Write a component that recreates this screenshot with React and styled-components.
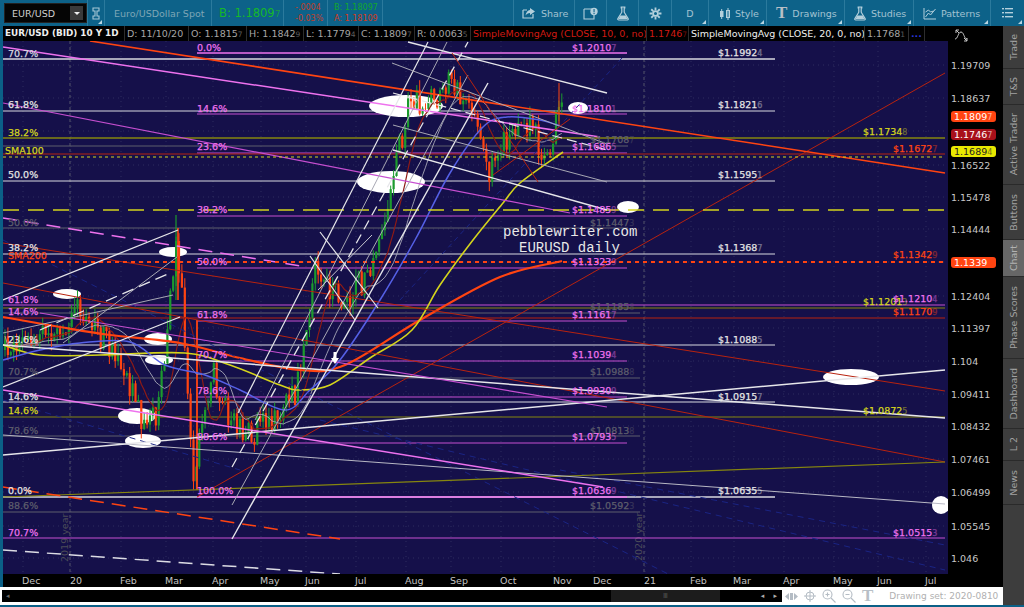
import React from 'react';
import styled, { createGlobalStyle } from 'styled-components';

const GlobalStyle = createGlobalStyle`
  html, body { margin: 0; padding: 0; background: #0b6087; overflow: hidden; }
  body { font-family: "DejaVu Sans", "Open Sans", sans-serif; }
`;

// chart colours
const C = {
  bg: '#15104a',
  white: '#d9d9e0',
  grey: '#5e5e6c',
  mag: '#c64fd0',
  pink: '#ee72ee',
  olive: '#86860f',
  yellow: '#d4d41c',
  red: '#b8230f',
  orange: '#ff4411',
  dred: '#8e1a16',
  blue: '#5560e6',
  navy: '#1a2484',
};

const hLines = [
  [3, 775, 59, C.white, 1.3], [197, 627, 53, C.pink, 1.3],
  [3, 775, 111, C.white, 1], [197, 627, 114, C.mag, 1.2],
  [3, 945, 138, C.olive, 1.3], [3, 628, 146, C.grey, 1],
  [197, 627, 153, C.mag, 1], [3, 945, 154, C.red, 1.2],
  [3, 775, 181, C.white, 1], [197, 627, 216, C.mag, 1.2],
  [3, 628, 228, C.grey, 1], [3, 775, 254, C.white, 1],
  [197, 627, 268, C.mag, 1.2], [3, 945, 305, C.mag, 1.1],
  [3, 945, 308, C.olive, 1.2], [3, 640, 313, C.grey, 1],
  [3, 945, 318, C.red, 1.1], [197, 627, 321, C.mag, 1.2],
  [3, 775, 345, C.white, 1], [197, 627, 361, C.mag, 1.2],
  [3, 640, 378, C.grey, 1], [197, 627, 397, C.mag, 1],
  [3, 775, 402, C.white, 1], [3, 945, 417, C.olive, 1.2],
  [3, 640, 436, C.grey, 1], [197, 627, 443, C.mag, 1.1],
  [3, 775, 497, C.white, 1.3], [197, 627, 497, C.pink, 1.3],
  [3, 640, 512, C.grey, 1], [3, 945, 538, C.mag, 1.1],
];

// x1 y1 x2 y2 colour width dash
const diagonals = [
  // background navy dashes
  [622, 58, 400, 300, C.navy, 1, '5 4'],
  [3, 240, 700, 590, C.navy, 1, '6 5'],
  [320, 420, 945, 570, C.navy, 1, '6 5'],
  [560, 470, 945, 545, C.navy, 1, '6 5'],
  [3, 400, 240, 470, C.navy, 1, '6 5'],
  // long thin red
  [3, 243, 945, 391, C.red, 1],
  [3, 283, 945, 462, C.red, 1],
  [197, 497, 945, 73, C.red, 1],
  // olive & grey & white long
  [3, 497, 945, 462, C.olive, 1.2],
  [3, 435, 945, 504, '#b8b8c4', 1],
  [3, 455, 945, 370, '#e6e6ea', 1.5],
  [3, 345, 945, 418, '#e6e6ea', 1.5],
  // heavy trend lines
  [90, 41, 945, 173, C.orange, 1.6],
  [3, 47, 600, 137, C.pink, 1.5],
  [3, 103, 570, 213, C.mag, 1.2],
  [3, 390, 603, 487, C.pink, 1.5],
  [40, 313, 607, 407, C.mag, 1.1],
  [3, 218, 307, 267, C.pink, 1.5, '14 8'],
  [3, 487, 340, 539, C.orange, 1.5, '14 8'],
  [3, 550, 340, 574, '#dcdce4', 1.5, '14 8'],
  [3, 210, 945, 210, C.yellow, 1.6, '16 9'],
  [3, 262, 945, 262, C.orange, 2, '4 4'],
  [3, 157, 945, 157, C.yellow, 1, '3 3'],
  // small channel on the left
  [3, 300, 178, 230, '#e6e6ea', 1.3],
  [63, 343, 177, 257, '#a8a8b4', 1],
  [40, 330, 170, 273, '#e6e6ea', 1.3, '12 6'],
  [3, 333, 173, 295, '#a8a8b4', 1],
  [3, 387, 180, 317, '#e6e6ea', 1.3],
  // big pitchfork
  [232, 539, 488, 83, '#e6e6ea', 1.4],
  [232, 505, 468, 75, '#a8a8b4', 1],
  [232, 467, 468, 42, '#e6e6ea', 1.3, '10 6'],
  [238, 413, 428, 42, '#e6e6ea', 1.2],
  [255, 420, 447, 42, '#a8a8b4', 1],
  [320, 232, 378, 308, '#e6e6ea', 1.2],
  [310, 256, 355, 320, '#e6e6ea', 1.2],
  [318, 290, 372, 235, '#c8c8d0', 1],
  // channel on the top
  [408, 42, 607, 93, '#e6e6ea', 1.3],
  [392, 63, 607, 144, '#a8a8b4', 1],
  [393, 93, 607, 150, '#e6e6ea', 1.2, '10 5'],
  [393, 125, 607, 182, '#a8a8b4', 1],
  [393, 150, 607, 210, '#e6e6ea', 1.3],
  // zigzag
  [452, 53, 538, 182, C.red, 1],
  [493, 175, 570, 119, C.red, 1],
];

const smooth = {
  orange: [[[3, 317], [60, 327], [110, 335], [180, 343], [240, 358], [300, 370], [345, 365], [420, 320], [500, 277], [562, 261]], C.orange, 2.2],
  yellow: [[[3, 345], [40, 355], [100, 355], [185, 353], [230, 365], [280, 385], [300, 390], [330, 385], [370, 358], [412, 330], [440, 285], [473, 240], [503, 203], [520, 183], [563, 152]], C.yellow, 1.6],
  blue: [[[3, 360], [40, 350], [80, 343], [130, 342], [165, 365], [205, 375], [240, 390], [285, 410], [310, 390], [340, 360], [380, 300], [415, 240], [450, 173], [483, 127], [507, 117], [540, 120], [560, 126]], C.blue, 1.5],
};

// catmull-rom through the points
const curve = (pts) => {
  let d = `M${pts[0][0]} ${pts[0][1]}`;
  for (let i = 0; i < pts.length - 1; i++) {
    const p0 = pts[Math.max(0, i - 1)];
    const p1 = pts[i];
    const p2 = pts[i + 1];
    const p3 = pts[Math.min(pts.length - 1, i + 2)];
    const c1x = p1[0] + (p2[0] - p0[0]) / 6;
    const c1y = p1[1] + (p2[1] - p0[1]) / 6;
    const c2x = p2[0] - (p3[0] - p1[0]) / 6;
    const c2y = p2[1] - (p3[1] - p1[1]) / 6;
    d += `C${c1x.toFixed(1)} ${c1y.toFixed(1)} ${c2x.toFixed(1)} ${c2y.toFixed(1)} ${p2[0]} ${p2[1]}`;
  }
  return d;
};

const ellipses = [
  [406, 106, 37, 11], [391, 182, 34, 11], [578, 108, 10, 6], [628, 207, 11, 6],
  [67, 294, 14, 5], [173, 252, 14, 5], [158, 339, 14, 6], [159, 360, 14, 5],
  [137, 416, 19, 8], [143, 441, 18, 7], [851, 377, 28, 8], [941, 505, 9, 9],
];

const LW = '#e4e4e4';

// text, x, centre y, colour
const labels = [
  ['70.7%', 8, 53, C.white], ['0.0%', 197, 47, C.pink], ['$1.20107', 572, 47, C.pink],
  ['$1.19924', 718, 52, LW], ['61.8%', 8, 104, LW], ['14.6%', 197, 108, C.pink],
  ['$1.18101', 572, 108, C.pink], ['$1.18216', 718, 104, LW], ['38.2%', 8, 132, C.yellow],
  ['$1.17348', 863, 131, C.yellow], ['$1.17087', 590, 139, C.grey], ['23.6%', 197, 146, C.pink],
  ['$1.16865', 572, 146, C.pink], ['SMA100', 5, 150, C.yellow], ['$1.16727', 893, 148, C.orange],
  ['50.0%', 8, 174, LW], ['$1.15951', 718, 174, LW], ['38.2%', 197, 209, C.pink],
  ['$1.14859', 572, 209, C.pink], ['50.0%', 8, 222, C.grey], ['$1.14473', 590, 222, C.grey],
  ['38.2%', 8, 247, LW], ['$1.13687', 718, 247, LW], ['SMA200', 8, 255, C.orange],
  ['$1.13429', 893, 254, C.orange], ['50.0%', 197, 261, C.pink], ['$1.13239', 572, 261, C.pink],
  ['61.8%', 8, 299, C.pink], ['14.6%', 8, 311, C.pink], ['$1.12013', 863, 301, C.yellow],
  ['$1.12104', 893, 298, C.pink], ['$1.11858', 590, 306, C.grey], ['$1.11709', 893, 311, C.orange],
  ['61.8%', 197, 314, C.pink], ['$1.11617', 572, 314, C.pink], ['23.6%', 8, 339, LW],
  ['$1.10885', 718, 339, LW], ['70.7%', 197, 354, C.pink], ['$1.10394', 572, 354, C.pink],
  ['70.7%', 8, 371, C.grey], ['$1.09888', 590, 371, C.grey], ['78.6%', 197, 390, C.pink],
  ['$1.09309', 572, 390, C.pink], ['14.6%', 8, 396, LW], ['$1.09157', 718, 396, LW],
  ['14.6%', 8, 410, C.yellow], ['$1.08725', 863, 410, C.yellow], ['78.6%', 8, 430, C.grey],
  ['$1.08138', 590, 430, C.grey], ['88.6%', 197, 436, C.pink], ['$1.07935', 572, 436, C.pink],
  ['0.0%', 8, 490, LW], ['100.0%', 197, 490, C.pink], ['$1.06369', 572, 490, C.pink],
  ['$1.06355', 718, 490, LW], ['88.6%', 8, 505, C.grey], ['$1.05923', 590, 505, C.grey],
  ['70.7%', 8, 532, C.pink], ['$1.05153', 893, 532, C.pink],
];

const path = [
  [5, 350], [20, 345], [50, 335], [75, 312], [100, 335], [125, 370], [148, 435], [160, 400],
  [176, 240], [182, 300], [193, 480], [202, 430], [212, 365], [222, 405], [240, 430], [260, 430],
  [285, 410], [300, 380], [315, 268], [330, 292], [350, 300], [375, 260], [395, 160], [410, 105],
  [430, 98], [450, 85], [470, 105], [488, 170], [510, 130], [530, 122], [548, 168], [558, 105], [563, 120],
];

const pathAt = (x) => {
  for (let i = 1; i < path.length; i++) {
    if (x <= path[i][0]) {
      const [x0, y0] = path[i - 1];
      const [x1, y1] = path[i];
      return y0 + ((y1 - y0) * (x - x0)) / (x1 - x0);
    }
  }
  return path[path.length - 1][1];
};

const makeCandles = () => {
  let seed = 4711;
  const rnd = () => {
    seed = (seed * 16807) % 2147483647;
    return seed / 2147483647;
  };
  const out = [];
  let prev = pathAt(5);
  for (let x = 5; x <= 563; x += 2.9) {
    const close = pathAt(x) + (rnd() - 0.5) * 30;
    const top = Math.min(prev, close);
    const bot = Math.max(prev, close);
    out.push({ x, open: prev, close, high: top - rnd() * 10, low: bot + rnd() * 10 });
    prev = close;
  }
  return out;
};

const candles = makeCandles();

const sma = (n) =>
  candles
    .map((c, i) => {
      const from = Math.max(0, i - n + 1);
      const win = candles.slice(from, i + 1);
      const avg = win.reduce((s, w) => s + w.close, 0) / win.length;
      return `${c.x.toFixed(1)},${avg.toFixed(1)}`;
    })
    .join(' ');

const ticks = [
  ['1.19709', 65], ['1.18637', 98], ['1.17', 131, true], ['1.16522', 165], ['1.15478', 197], ['1.14444', 229],
  ['1.13', 262, true], ['1.12404', 296], ['1.11397', 328], ['1.104', 361], ['1.09411', 394], ['1.08432', 426],
  ['1.07461', 459], ['1.06499', 492], ['1.05545', 526], ['1.046', 558],
];

const months = [
  ['Dec', 22], ['20', 70], ['Feb', 120], ['Mar', 165], ['Apr', 212], ['May', 260], ['Jun', 305], ['Jul', 355],
  ['Aug', 405], ['Sep', 450], ['Oct', 500], ['Nov', 553], ['Dec', 593], ['21', 644], ['Feb', 690], ['Mar', 733],
  ['Apr', 783], ['May', 833], ['Jun', 877], ['Jul', 925],
];

const tabs = [
  ['Trade', 43], ['T&S', 36], ['Active Trader', 80], ['Buttons', 55], ['Chart', 37, true],
  ['Phase Scores', 82], ['Dashboard', 70], ['L 2', 32], ['News', 44],
];

const study = [
  ['EUR/USD (BID) 10 Y 1D', 122, 'title'], ['D: 11/10/20', 64], ['O: 1.18157', 58, 'dim'], ['H: 1.18429', 57, 'dim'],
  ['L: 1.17794', 55, 'dim'], ['C: 1.18097', 56, 'dim'], ['R: 0.00635', 56, 'dim'],
  ['SimpleMovingAvg (CLOSE, 10, 0, no)', 176, 'red'], ['1.17467', 42, 'reddim'],
  ['SimpleMovingAvg (CLOSE, 20, 0, no)', 176, 'bright'], ['1.17681', 44, 'dim'],
];

const Page = styled.div`
  width: 1024px;
  height: 607px;
  display: flex;
  flex-direction: column;
  overflow: hidden;
  background: #0b6087;
`;

const Toolbar = styled.div`
  height: 26px;
  flex: none;
  display: flex;
  align-items: stretch;
  background: #0d6289;
  color: #a3c3d2;
  font-size: 9.5px;
`;

const ToolCell = styled.div`
  position: relative;
  width: ${(p) => p.$w}px;
  flex: none;
  display: flex;
  align-items: center;
  justify-content: ${(p) => p.$center ? 'center' : 'flex-start'};
  gap: ${(p) => p.$gap || 5}px;
  padding-left: ${(p) => p.$pad || 0}px;
  box-sizing: border-box;
  border-right: ${(p) => p.$last ? 'none' : '1px solid #2b7a9d'};
  ${(p) => p.$corner && `
    &::after {
      content: "";
      position: absolute;
      right: 2px;
      bottom: 2px;
      border-left: 4px solid transparent;
      border-bottom: 4px solid #b8d4e0;
    }
  `}
`;

const SymbolBox = styled.div`
  width: 83px;
  height: 20px;
  margin-left: 4px;
  display: flex;
  align-items: center;
  justify-content: space-between;
  box-sizing: border-box;
  padding: 0 3px 0 7px;
  background: #050505;
  border: 1px solid #222;
  color: #cfcfcf;
  font-size: 9.5px;
`;

const DropButton = styled.div`
  width: 13px;
  height: 14px;
  background: #3a3a3a;
  display: flex;
  align-items: center;
  justify-content: center;
  &::after {
    content: "";
    border-left: 3px solid transparent;
    border-right: 3px solid transparent;
    border-top: 3px solid #eee;
  }
`;

const SpotName = styled.span`
  color: #7ea6b6;
  font-size: 9.5px;
  white-space: nowrap;
`;

const BigBid = styled.span`
  color: #15b82a;
  font-size: 11.5px;
  white-space: nowrap;
  small { font-size: 9px; opacity: 0.7; }
`;

const Stack = styled.div`
  display: flex;
  flex-direction: column;
  justify-content: center;
  font-size: 8px;
  line-height: 11px;
  white-space: nowrap;
`;

const Quote = styled.span`
  color: ${(p) => p.$c};
`;

const Body = styled.div`
  flex: 1;
  min-height: 0;
  display: flex;
`;

const Main = styled.div`
  flex: 1;
  min-width: 0;
  display: flex;
  flex-direction: column;
  padding-left: 3px;
`;

const StudyBar = styled.div`
  height: 15px;
  flex: none;
  display: flex;
  background: #000;
  font-size: 9.5px;
  line-height: 15px;
  white-space: nowrap;
`;

const StudyCell = styled.div`
  width: ${(p) => p.$w}px;
  flex: none;
  box-sizing: border-box;
  padding-left: 2px;
  overflow: hidden;
  border-right: 1px solid #2d2d2d;
  color: ${(p) => p.$kind === 'red' || p.$kind === 'reddim' ? '#d11a12' : p.$kind === 'title' || p.$kind === 'bright' ? '#efefef' : '#a6a6a6'};
  font-weight: ${(p) => p.$kind === 'title' ? 700 : 400};
  font-size: ${(p) => p.$kind === 'title' ? '8.8px' : '9.5px'};
  small { font-size: 7.5px; opacity: 0.55; }
`;

const StudyMore = styled(StudyCell)`
  color: #2a35d8;
  font-weight: 700;
`;

const ChartRow = styled.div`
  height: 533px;
  flex: none;
  display: flex;
`;

const Plot = styled.svg`
  display: block;
  width: 945px;
  height: 533px;
  flex: none;
  background: ${C.bg};
`;

const Axis = styled.div`
  position: relative;
  flex: 1;
  margin-top: -15px;
  background: #000;
  color: #c8c8c8;
  font-size: 9.5px;
`;

const AxisIcon = styled.svg`
  display: block;
  position: absolute;
  left: 6px;
  top: 3px;
`;

const AxisTicks = styled.div`
  display: flex;
  flex-direction: column;
  padding: 33px 0 0 3px;
`;

const Tick = styled.div`
  height: ${(p) => p.$h}px;
  line-height: 13px;
  visibility: ${(p) => p.$skip ? 'hidden' : 'visible'};
`;

const PriceTag = styled.div`
  position: absolute;
  left: 3px;
  top: ${(p) => p.$y - 41 + 15 - 5}px;
  width: 42px;
  height: 11px;
  line-height: 11px;
  border-radius: 3px;
  padding-left: 3px;
  color: ${(p) => p.$fg};
  background: ${(p) => p.$bg};
  small { font-size: 8px; opacity: 0.6; }
`;

const TimeAxis = styled.div`
  height: 13px;
  flex: none;
  display: flex;
  background: #000;
  padding-left: 19px;
  color: #c4c4c4;
  font-size: 9.5px;
  line-height: 13px;
`;

const Month = styled.span`
  width: ${(p) => p.$w}px;
  flex: none;
`;

const Footer = styled.div`
  height: 18px;
  flex: none;
  display: flex;
  align-items: center;
  background: #fff;
  margin-left: -3px;
  padding-left: 2px;
`;

const ScrollTrack = styled.div`
  position: relative;
  width: 780px;
  height: 12px;
  flex: none;
  background: #000;
  display: flex;
  align-items: center;
  box-sizing: border-box;
  padding: 0 4px;
  color: #666;
  font-size: 7px;
`;

const ScrollThumb = styled.div`
  position: absolute;
  left: 609px;
  top: 0;
  width: 109px;
  height: 12px;
  background: #1c1c1c;
  color: #555;
  text-align: center;
  line-height: 12px;
  font-size: 7px;
`;

const ScrollArrows = styled.span`
  position: absolute;
  right: 5px;
  top: 0;
  line-height: 12px;
  color: #aaa;
  word-spacing: 7px;
`;

const FooterTools = styled.div`
  display: flex;
  align-items: center;
  gap: 6px;
  padding-left: 3px;
  color: #b4bcc4;
`;

const FontIcon = styled.span`
  font-family: "Liberation Serif", serif;
  font-size: 17px;
  font-weight: 700;
  line-height: 16px;
  color: #b8bfc6;
`;

const DrawingSet = styled.span`
  margin-left: 16px;
  color: #b0b0b0;
  font-size: 9px;
  white-space: nowrap;
`;

const SideTabs = styled.div`
  width: 21px;
  flex: none;
  display: flex;
  flex-direction: column;
  background: #3d3d3d;
  margin-bottom: 2px;
`;

const SideTab = styled.div`
  height: ${(p) => p.$h}px;
  flex: none;
  box-sizing: border-box;
  display: flex;
  align-items: center;
  justify-content: center;
  background: ${(p) => p.$active ? '#666' : '#3d3d3d'};
  color: ${(p) => p.$active ? '#b2b2b2' : '#a2a2a2'};
  border-bottom: 1px solid #2a2a2a;
  font-size: 9.5px;
  span {
    writing-mode: vertical-rl;
    transform: rotate(180deg);
    white-space: nowrap;
  }
`;

const Tiny = styled.text`
  font-family: "DejaVu Sans", sans-serif;
  font-size: 9.5px;
  fill: ${(p) => p.$c};
  stroke: ${(p) => p.$c};
  stroke-width: 0.25px;
  tspan { opacity: 0.45; font-size: 8px; }
`;

const Watermark = styled.text`
  font-family: "Liberation Mono", monospace;
  font-size: 14px;
  fill: #e8e8e8;
`;

const YearMark = styled.text`
  font-family: "DejaVu Sans", sans-serif;
  font-size: 9.5px;
  fill: #4c4c58;
`;

const withDim = (text) => {
  const lead = text.slice(0, -1);
  return <>{lead}<small>{text.slice(-1)}</small></>;
};

const Flask = ({ size = 14 }) => (
  <svg width={size - 2} height={size + 1} viewBox="0 0 12 15">
    <path d="M4.2 1h3.6v1H7.2v4.2l3.9 6.4c.4.7 0 1.4-.8 1.4H1.7c-.8 0-1.2-.7-.8-1.4l3.9-6.4V2h-.6z" fill="none" stroke="#b4d0dc" strokeWidth="1.2" />
    <path d="M3.4 9.5h5.2l2 3.6H1.4z" fill="#b4d0dc" />
  </svg>
);

const PlotArea = () => (
  <Plot viewBox="3 41 945 533">
    {/* grid */}
    {months.map(([m, x]) => (
      <line key={`${m}${x}`} x1={x + 1} y1="41" x2={x + 1} y2="574" stroke="#2e2c5e" strokeWidth="1" strokeDasharray="1 4" />
    ))}
    {ticks.map(([t, y]) => (
      <line key={t} x1="3" y1={y} x2="948" y2={y} stroke="#2e2c5e" strokeWidth="1" strokeDasharray="1 4" />
    ))}
    <line x1="70" y1="41" x2="70" y2="574" stroke="#55556a" strokeDasharray="3 3" />
    <line x1="644" y1="41" x2="644" y2="574" stroke="#55556a" strokeDasharray="3 3" />
    <YearMark transform="rotate(-90 68 562)" x="68" y="562">2019 year</YearMark>
    <YearMark transform="rotate(-90 642 561)" x="642" y="561">2020 year</YearMark>

    {hLines.map(([x1, x2, y, c, w], i) => (
      <line key={i} x1={x1} y1={y} x2={x2} y2={y} stroke={c} strokeWidth={w} />
    ))}
    {ellipses.map(([cx, cy, rx, ry]) => (
      <ellipse key={`${cx}${cy}`} cx={cx} cy={cy} rx={rx} ry={ry} fill="#fff" />
    ))}
    {candles.map((c) => (
      <g key={c.x} stroke={c.close < c.open ? '#1c9a2e' : C.orange}>
        <line x1={c.x} y1={c.high} x2={c.x} y2={c.low} strokeWidth="1" />
        <line x1={c.x} y1={c.open} x2={c.x} y2={c.close} strokeWidth="2.2" />
      </g>
    ))}
    <line x1="176" y1="215" x2="176" y2="300" stroke="#1c9a2e" strokeWidth="1.2" />
    <line x1="178" y1="228" x2="178" y2="300" stroke={C.orange} strokeWidth="1.6" />
    <line x1="197" y1="320" x2="197" y2="490" stroke={C.orange} strokeWidth="1.8" />
    <line x1="559" y1="83" x2="559" y2="125" stroke={C.orange} strokeWidth="1" />

    <polyline points={sma(10)} fill="none" stroke={C.dred} strokeWidth="1.2" />
    <polyline points={sma(20)} fill="none" stroke="#a8a8b8" strokeWidth="0.9" />
    {Object.entries(smooth).map(([k, [pts, c, w]]) => (
      <path key={k} d={curve(pts)} fill="none" stroke={c} strokeWidth={w} />
    ))}
    {diagonals.map(([x1, y1, x2, y2, c, w, dash], i) => (
      <line key={i} x1={x1} y1={y1} x2={x2} y2={y2} stroke={c} strokeWidth={w} strokeDasharray={dash} />
    ))}
    <path d="M335 364l-4-6h2.5v-6h3v6h2.5z" fill="#fff" />

    {labels.map(([t, x, y, c], i) => (
      <Tiny key={i} x={x} y={y + 3.5} $c={c}>
        {t.startsWith('$') ? <>{t.slice(0, -1)}<tspan>{t.slice(-1)}</tspan></> : t}
      </Tiny>
    ))}
    <Watermark x="503" y="236">pebblewriter.com</Watermark>
    <Watermark x="519" y="252">EURUSD daily</Watermark>
  </Plot>
);

const App = () => (
  <Page>
    <GlobalStyle />
    <Toolbar>
      <ToolCell $w={88}>
        <SymbolBox>EUR/USD<DropButton /></SymbolBox>
      </ToolCell>
      <ToolCell $w={17} $center $corner>
        <svg width="8" height="13" viewBox="0 0 8 13">
          <path d="M1 1h6v3H5v5h2v3H1V9h2V4H1z" fill="none" stroke="#a8c8d6" strokeWidth="1.1" />
        </svg>
      </ToolCell>
      <ToolCell $w={107} $pad={9}>
        <SpotName>Euro/USDollar Spot</SpotName>
      </ToolCell>
      <ToolCell $w={72} $pad={7}>
        <BigBid>B: 1.1809<small>7</small></BigBid>
      </ToolCell>
      <ToolCell $w={44} $pad={11}>
        <Stack>
          <Quote $c="#c2402a">-.0004</Quote>
          <Quote $c="#c2402a">-0.03%</Quote>
        </Stack>
      </ToolCell>
      <ToolCell $w={55} $pad={6}>
        <Stack>
          <Quote $c="#12a82c">B: 1.18097</Quote>
          <Quote $c="#d13a1c">A: 1.18109</Quote>
        </Stack>
      </ToolCell>
      <ToolCell $w={131} />
      <ToolCell $w={61} $pad={8}>
        <svg width="14" height="12" viewBox="0 0 14 12">
          <path d="M1 3h4M1 3v8h10V7" fill="none" stroke="#b4d0dc" strokeWidth="1.2" />
          <path d="M8 1l5 3.5L8 8V6C6 6 4.5 7 3.5 8.5 4 5.5 5.5 3 8 3z" fill="#b4d0dc" />
        </svg>
        Share
      </ToolCell>
      <ToolCell $w={32} $center>
        <svg width="15" height="13" viewBox="0 0 15 13">
          <path d="M1 2h8M1 2v10h10V8" fill="none" stroke="#b4d0dc" strokeWidth="1.1" />
          <circle cx="11" cy="4.5" r="3.7" fill="#b4d0dc" />
          <rect x="10.5" y="2" width="1.1" height="3.3" fill="#0d6289" />
          <rect x="10.5" y="6" width="1.1" height="1.1" fill="#0d6289" />
        </svg>
      </ToolCell>
      <ToolCell $w={32} $center><Flask /></ToolCell>
      <ToolCell $w={33} $center>
        <svg width="13" height="13" viewBox="0 0 24 24" fill="none" stroke="#b4d0dc" strokeWidth="3.4">
          <circle cx="12" cy="12" r="4.5" />
          <path d="M12 1v5M12 18v5M1 12h5M18 12h5M4.2 4.2l3.5 3.5M16.3 16.3l3.5 3.5M4.2 19.8l3.5-3.5M16.3 7.7l3.5-3.5" />
        </svg>
      </ToolCell>
      <ToolCell $w={37} $center $corner>D</ToolCell>
      <ToolCell $w={58} $pad={10} $corner $gap={4}>
        <svg width="12" height="13" viewBox="0 0 12 13">
          <rect x="1" y="4" width="3.5" height="6" fill="#b4d0dc" />
          <path d="M2.7 2v10" stroke="#b4d0dc" />
          <rect x="7.5" y="3.5" width="3" height="7" fill="none" stroke="#b4d0dc" />
          <path d="M9 1v12" stroke="#b4d0dc" />
        </svg>
        Style
      </ToolCell>
      <ToolCell $w={78} $pad={9} $corner>
        <FontIcon>T</FontIcon>Drawings
      </ToolCell>
      <ToolCell $w={69} $pad={9} $corner><Flask />Studies</ToolCell>
      <ToolCell $w={77} $pad={9} $corner $gap={4}>
        <svg width="14" height="13" viewBox="0 0 14 13" fill="none" stroke="#b4d0dc" strokeWidth="1">
          <path d="M1 1v11h12" />
          <path d="M2.5 10l3-4 2 2 5-6M2.5 5l3-2 2 2 3-1" />
        </svg>
        Patterns
      </ToolCell>
      <ToolCell $w={33} $center $corner $last>
        <svg width="11" height="10" viewBox="0 0 11 10" fill="#b4d0dc">
          <rect x="0" y="0" width="2" height="1.4" /><rect x="3" y="0" width="8" height="1.4" />
          <rect x="0" y="4" width="2" height="1.4" /><rect x="3" y="4" width="8" height="1.4" />
          <rect x="0" y="8" width="2" height="1.4" /><rect x="3" y="8" width="8" height="1.4" />
        </svg>
      </ToolCell>
    </Toolbar>

    <Body>
      <Main>
        <StudyBar>
          {study.map(([text, w, kind]) => (
            <StudyCell key={text} $w={w} $kind={kind}>
              {kind === 'dim' || kind === 'reddim' ? withDim(text) : text}
            </StudyCell>
          ))}
          <StudyMore $w={16}>...</StudyMore>
        </StudyBar>
        <ChartRow>
          <PlotArea />
          <Axis>
            <AxisIcon width="15" height="13" viewBox="0 0 15 13" fill="none" stroke="#c8c8c8">
              <path d="M1 10c3 0 3-7 6-7s3 7 6 7" />
              <path d="M2 1l3 3M2 4V1h3M13 12l-3-3M13 9v3h-3" />
            </AxisIcon>
            <AxisTicks>
              {ticks.map(([t, y, skip], i) => (
                <Tick key={t} $h={i < ticks.length - 1 ? ticks[i + 1][1] - y : 14} $skip={skip}>{t}</Tick>
              ))}
            </AxisTicks>
            <PriceTag $y={116} $bg="#ff4411" $fg="#fff">{withDim('1.18097')}</PriceTag>
            <PriceTag $y={134} $bg="#a8101a" $fg="#fff">{withDim('1.17467')}</PriceTag>
            <PriceTag $y={151} $bg="#e8e800" $fg="#222">{withDim('1.16894')}</PriceTag>
            <PriceTag $y={262} $bg="#ff4411" $fg="#fff">1.1339</PriceTag>
          </Axis>
        </ChartRow>
        <TimeAxis>
          {months.map(([m, x], i) => (
            <Month key={`${m}${x}`} $w={i < months.length - 1 ? months[i + 1][1] - x : 30}>{m}</Month>
          ))}
        </TimeAxis>
        <Footer>
          <ScrollTrack>
            <span>◂</span>
            <ScrollThumb>Ⅲ</ScrollThumb>
            <ScrollArrows>◂ ▸</ScrollArrows>
          </ScrollTrack>
          <FooterTools>
            <svg width="13" height="9" viewBox="0 0 13 9" fill="#b4bcc4">
              <path d="M0 4.5L4 1v7zM13 4.5L9 1v7z" /><rect x="5" y="1" width="3" height="7" />
            </svg>
            <svg width="12" height="12" viewBox="0 0 12 12" fill="none" stroke="#b4bcc4">
              <circle cx="6" cy="6" r="4" /><path d="M6 0v12M0 6h12" />
            </svg>
            <svg width="14" height="14" viewBox="0 0 14 14" fill="none" stroke="#b4bcc4" strokeWidth="1.1">
              <circle cx="5.5" cy="5.5" r="4.5" /><path d="M3.5 5.5h4M5.5 3.5v4M9 9l4.5 4.5" />
            </svg>
            <svg width="14" height="14" viewBox="0 0 14 14" fill="none" stroke="#b4bcc4" strokeWidth="1.1">
              <circle cx="5.5" cy="5.5" r="4.5" /><path d="M3.5 5.5h4M9 9l4.5 4.5" />
            </svg>
            <FontIcon>T</FontIcon>
          </FooterTools>
          <DrawingSet>Drawing set: 2020-0810</DrawingSet>
        </Footer>
      </Main>
      <SideTabs>
        {tabs.map(([t, h, active]) => (
          <SideTab key={t} $h={h} $active={active}><span>{t}</span></SideTab>
        ))}
      </SideTabs>
    </Body>
  </Page>
);

export default App;
